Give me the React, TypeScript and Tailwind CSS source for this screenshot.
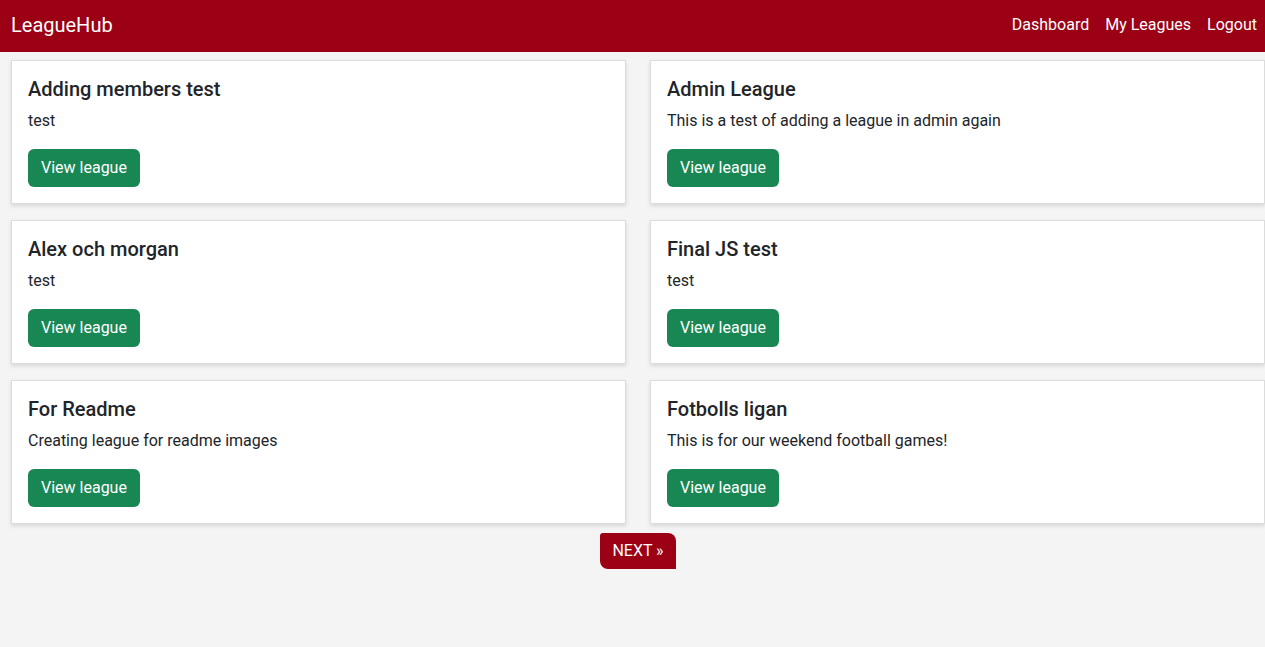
import React from "react";

const leagues = [
  { name: "Adding members test", desc: "test" },
  { name: "Admin League", desc: "This is a test of adding a league in admin again" },
  { name: "Alex och morgan", desc: "test" },
  { name: "Final JS test", desc: "test" },
  { name: "For Readme", desc: "Creating league for readme images" },
  { name: "Fotbolls ligan", desc: "This is for our weekend football games!" },
];

export default function App() {
  return (
    <div className="min-h-[647px] bg-[#f4f4f4] text-[#212529] font-['Roboto',sans-serif]">
      <nav className="h-[52px] bg-[#9b0014] flex items-center justify-between pl-[11px] pb-[3px]">
        <span className="text-white text-[20px] leading-[30px]">LeagueHub</span>
        <div className="flex items-center text-white text-[16px] leading-[24px]">
          <a className="px-2">Dashboard</a>
          <a className="px-2">My Leagues</a>
          <a className="px-2">Logout</a>
        </div>
      </nav>
      <div className="pl-[11px] pt-2">
        <div className="grid grid-cols-2 gap-x-6 gap-y-4">
          {leagues.map((l) => (
            <div
              key={l.name}
              className="bg-white border border-[#dcdcdc] shadow-[0_2px_4px_rgba(0,0,0,0.12)] p-4"
            >
              <h5 className="text-[20px] leading-[24px] font-medium mb-2">{l.name}</h5>
              <p className="text-[16px] leading-[24px] mb-4">{l.desc}</p>
              <button className="bg-[#198754] text-white text-[16px] leading-[24px] px-[13px] py-[7px] rounded-md">
                View league
              </button>
            </div>
          ))}
        </div>
        <div className="flex justify-center mt-[9px]">
          <button className="bg-[#9b0014] text-white text-[16px] leading-[24px] px-[12px] py-[6px] rounded-tl-[3px] rounded-tr-[8px] rounded-bl-[8px] rounded-br-none">
            NEXT »
          </button>
        </div>
      </div>
    </div>
  );
}
